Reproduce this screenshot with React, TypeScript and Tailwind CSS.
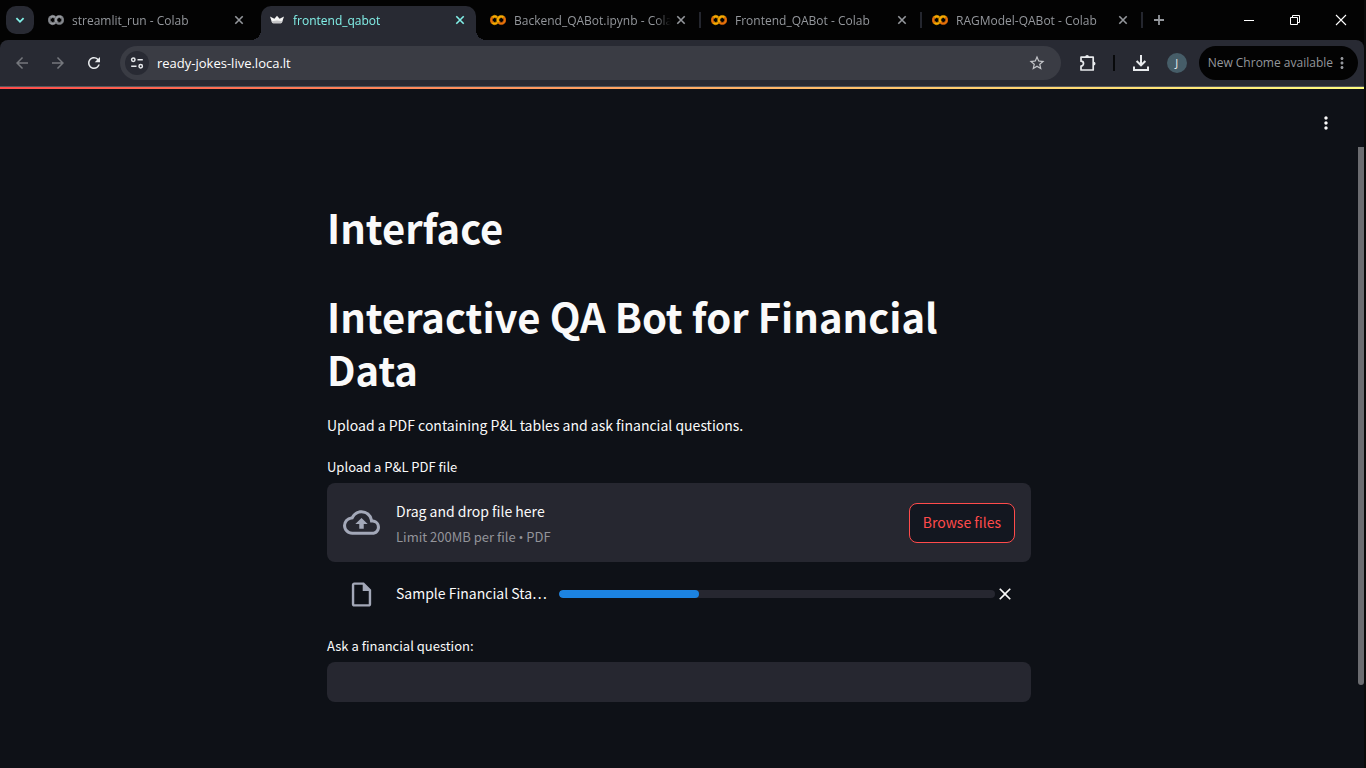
import type { ReactNode } from "react";
import {
  MdArrowBack,
  MdArrowForward,
  MdClose,
  MdMoreVert,
  MdOutlineCloudUpload,
  MdOutlineInsertDriveFile,
  MdRefresh,
  MdStarBorder,
} from "react-icons/md";

function ColabIcon({ muted = false }: { muted?: boolean }) {
  const light = muted ? "#9a9da2" : "#F9AB00";
  const dark = muted ? "#85888d" : "#E8710A";
  return (
    <svg viewBox="0 0 24 24" className="size-4 shrink-0" strokeWidth="0.8" aria-hidden="true">
      <path fill={light} stroke={light} d="M2.19 7.1 4.54 9.46a3.59 3.59 0 0 1 5.08 0l1.71-2.93-.1-.08A6.93 6.93 0 0 0 2.19 7.1Z" />
      <path fill={light} stroke={light} d="M11.34 17.46 9.62 14.54a3.59 3.59 0 0 1-5.08 0L2.19 16.9a6.93 6.93 0 0 0 9 .65l.15-.09Z" />
      <path fill={dark} stroke={dark} d="M4.54 9.46 2.19 7.1a6.93 6.93 0 0 0 0 9.79l2.36-2.36a3.59 3.59 0 0 1-.01-5.07Z" />
      <path fill={light} stroke={light} d="M12 7.1a6.93 6.93 0 0 0 0 9.79l2.36-2.36a3.59 3.59 0 1 1 5.08-5.08L21.81 7.1A6.93 6.93 0 0 0 12 7.1Z" />
      <path fill={dark} stroke={dark} d="M21.81 7.1 19.46 9.46a3.59 3.59 0 0 1-5.08 5.08L12 16.9A6.93 6.93 0 0 0 21.81 7.1Z" />
    </svg>
  );
}

function CrownIcon() {
  return (
    <svg viewBox="0 0 16 16" className="size-4 shrink-0" aria-hidden="true">
      <path fill="#f5f5f5" d="M1 4.4 5.400 6.800 8 3.800l2.600 3L15 4.400l-1.900 5.900c-.2.7-.7 1-1.400 1H4.300c-.7 0-1.200-.3-1.400-1Z" />
      <path fill="#c4c4c6" d="M2.600 9.300 8 8.500l5.400.8-.3 1c-.2.7-.7 1-1.400 1H4.300c-.7 0-1.200-.3-1.400-1Z" />
    </svg>
  );
}

type Tab = { title: string; icon: ReactNode; active?: boolean; divider?: boolean };

const tabs: Tab[] = [
  { title: "streamlit_run - Colab", icon: <ColabIcon muted /> },
  { title: "frontend_qabot", icon: <CrownIcon />, active: true },
  { title: "Backend_QABot.ipynb - Colab", icon: <ColabIcon />, divider: true },
  { title: "Frontend_QABot - Colab", icon: <ColabIcon />, divider: true },
  { title: "RAGModel-QABot - Colab", icon: <ColabIcon />, divider: true },
];

function BrowserTab({ title, icon, active, divider }: Tab) {
  return (
    <div className="relative min-w-0 max-w-[221px] flex-1 pt-[6px]">
      <div
        className={
          active
            ? "relative mr-[6px] flex h-[34px] items-center rounded-t-[10px] bg-[#282a33] pb-[6px] pl-2 text-[#82f0e8] before:absolute before:bottom-0 before:-left-[10px] before:size-[10px] before:bg-[radial-gradient(circle_at_0_0,transparent_10px,#282a33_10px)] after:absolute after:-right-[10px] after:bottom-0 after:size-[10px] after:bg-[radial-gradient(circle_at_100%_0,transparent_10px,#282a33_10px)]"
            : "mr-[6px] flex h-[34px] items-center pb-[6px] pl-2 text-[#94979c]"
        }
      >
        {icon}
        <span className="ml-2 min-w-0 flex-1 overflow-hidden mask-r-from-90% pt-[2px] text-[12px] leading-4 whitespace-nowrap">
          {title}
        </span>
        <button aria-label={`Close ${title}`} className="mr-2 ml-[2px] flex size-4 items-center justify-center">
          <svg viewBox="0 0 16 16" className="size-4" stroke="currentColor" strokeWidth="1.6" aria-hidden="true">
            <path d="m4.3 4.3 7.4 7.4m0-7.4-7.4 7.4" />
          </svg>
        </button>
      </div>
      {divider && <span className="absolute top-3 right-[2px] h-4 w-[2px] bg-[#24262e]" />}
    </div>
  );
}

function TabStrip() {
  return (
    <div className="flex h-10 bg-[#030303]">
      <button aria-label="Search tabs" className="m-[6px] flex size-7 shrink-0 items-center justify-center rounded-[10px] bg-[#282a33] text-[#82f0e8]">
        <svg viewBox="0 0 16 16" className="size-4" fill="none" stroke="currentColor" strokeWidth="1.8" aria-hidden="true">
          <path d="m4.4 6.2 3.6 3.6 3.6-3.6" />
        </svg>
      </button>
      <div className="flex min-w-0 flex-1">
        {tabs.map((tab) => (
          <BrowserTab key={tab.title} {...tab} />
        ))}
        <button aria-label="New tab" className="flex w-7 shrink-0 items-center justify-center text-[#94979c]">
          <svg viewBox="0 0 16 16" className="size-4 shrink-0" stroke="currentColor" strokeWidth="1.8" aria-hidden="true">
            <path d="M8 3v10M3 8h10" />
          </svg>
        </button>
      </div>
      <div className="flex shrink-0 text-white">
        <button aria-label="Minimize" className="flex w-[46px] items-center justify-center">
          <svg viewBox="0 0 12 12" className="size-3" stroke="currentColor" aria-hidden="true">
            <path d="M1 6.5h10" />
          </svg>
        </button>
        <button aria-label="Restore" className="flex w-[46px] items-center justify-center">
          <svg viewBox="0 0 12 12" className="size-3" fill="none" stroke="currentColor" aria-hidden="true">
            <path d="M1.5 3.5h7v7h-7zM3.5 3.5v-2h7v7h-2" />
          </svg>
        </button>
        <button aria-label="Close window" className="flex w-[46px] items-center justify-center">
          <svg viewBox="0 0 12 12" className="size-3" stroke="currentColor" strokeWidth="1.1" aria-hidden="true">
            <path d="m1 1 10 10m0-10L1 11" />
          </svg>
        </button>
      </div>
    </div>
  );
}

function Toolbar() {
  return (
    <div className="bg-[#030303]">
      <div className="flex h-[46px] items-center rounded-t-[8px] bg-[#282a33] pr-[6px] pl-1 text-[#e8eaed]">
        <button aria-label="Back" className="flex w-9 justify-center text-[#75777d]">
          <MdArrowBack size={18} />
        </button>
        <button aria-label="Forward" className="flex w-9 justify-center text-[#75777d]">
          <MdArrowForward size={18} />
        </button>
        <button aria-label="Reload" className="flex w-9 justify-center">
          <MdRefresh size={18} />
        </button>
        <div className="ml-2 flex h-[34px] min-w-0 flex-1 items-center rounded-full bg-[#3a3c44] px-[5px]">
          <button aria-label="View site information" className="flex size-6 shrink-0 items-center justify-center rounded-full bg-[#282a33]">
            <svg viewBox="0 0 16 16" className="size-4" fill="none" stroke="currentColor" strokeWidth="1.5" aria-hidden="true">
              <circle cx="4.3" cy="4.7" r="1.7" />
              <path d="M8.5 4.7h5.3M2.2 11.3h5.3" />
              <circle cx="11.7" cy="11.3" r="1.7" />
            </svg>
          </button>
          <input
            aria-label="Address"
            defaultValue="ready-jokes-live.loca.lt"
            className="ml-2 min-w-0 flex-1 bg-transparent pt-[2px] text-[13px] text-white outline-none"
          />
          <button aria-label="Bookmark this page" className="mr-[10px] text-[#c4c6ca]">
            <MdStarBorder size={18} />
          </button>
        </div>
        <button aria-label="Extensions" className="ml-[18px] flex size-[18px] items-center justify-center">
          <svg viewBox="0 0 18 18" className="size-[18px] shrink-0" fill="none" stroke="currentColor" strokeWidth="1.7" strokeLinejoin="round" aria-hidden="true">
            <path d="M2 3.2h12.2V16H2v-4c1.5 0 2.5-1 2.5-2.4S3.5 7.2 2 7.2Z" />
            <path fill="currentColor" stroke="none" d="M6.2 3a1.9 1.9 0 0 1 3.8 0ZM14.6 7.7a1.9 1.9 0 0 1 0 3.8Z" />
          </svg>
        </button>
        <span className="mx-4 h-4 w-[2px] bg-[#08090b]" />
        <button aria-label="Downloads" className="flex size-5 items-center justify-center">
          <svg viewBox="0 0 18 18" className="size-[18px] shrink-0" fill="none" stroke="currentColor" strokeWidth="2" aria-hidden="true">
            <path d="M9 1v10M4.6 7 9 11.3 13.4 7M2 12.5V16h14v-3.5" />
          </svg>
        </button>
        <button aria-label="Profile" className="mr-3 ml-4 flex size-5 items-center justify-center rounded-full bg-[#465d68] text-[11px]">
          J
        </button>
        <button className="flex h-[34px] items-center rounded-full bg-[#030303] pr-[7px] pl-[9px] text-[12px] whitespace-nowrap text-[#94979c]">
          New Chrome available
          <MdMoreVert size={18} />
        </button>
      </div>
    </div>
  );
}

function Uploader() {
  return (
    <section className="mt-[17px]">
      <label htmlFor="pdf" className="block pb-[3px] text-[13px] leading-[26px]">
        Upload a P&amp;L PDF file
      </label>
      <div className="flex items-center rounded-lg bg-[#262730] p-4">
        <MdOutlineCloudUpload size={37} className="mr-4 shrink-0 text-[#a3a8b8]" />
        <div className="min-w-0 flex-1">
          <p className="text-[14px] leading-6">Drag and drop file here</p>
          <p className="mt-1 text-[13px] leading-[19px] text-[#93949a]">
            Limit 200MB per file <span className="font-['Open_Sans',sans-serif] leading-none">•</span> PDF
          </p>
        </div>
        <input id="pdf" type="file" accept="application/pdf" className="hidden" />
        <button className="h-10 rounded-lg border border-[#ff4b4b] bg-[#131720] px-[13px] text-[14px] text-[#ff4b4b]">
          Browse files
        </button>
      </div>
      <div className="flex h-16 items-center px-4">
        <div className="mr-4 flex w-[37px] shrink-0 justify-center">
          <MdOutlineInsertDriveFile size={29} className="text-[#a3a8b8]" />
        </div>
        <p className="mr-2 w-[155px] shrink-0 pb-[2px] text-[14px] leading-6 whitespace-nowrap">Sample Financial Sta…</p>
        <div role="progressbar" aria-label="Upload progress" aria-valuenow={32} className="h-2 min-w-0 flex-1 overflow-hidden rounded-full bg-[#262730]">
          <div className="h-full w-[32%] rounded-full bg-[#1c83e1]" />
        </div>
        <button aria-label="Remove file">
          <MdClose size={20} />
        </button>
      </div>
    </section>
  );
}

function StreamlitPage() {
  return (
    <div className="flex flex-1 flex-col bg-[#0e1117] font-['Noto_Sans_CJK_SC',sans-serif] text-[#fafafa]">
      <div className="h-[3px] border-t border-[#55575c] bg-linear-to-r from-[#ff4b4b] to-[#fffd80]" />
      <header className="flex h-[58px] shrink-0 items-end justify-end pr-7 pb-[14px]">
        <button aria-label="Main menu">
          <MdMoreVert size={20} />
        </button>
      </header>
      <div className="flex flex-1">
        <main className="min-w-0 flex-1 pt-[54px] pb-16">
          <div className="mx-auto max-w-[704px]">
            <h1 className="text-[40px] leading-[53px] font-bold">Interface</h1>
            <h1 className="mt-9 text-[40px] leading-[53px] font-bold">Interactive QA Bot for Financial Data</h1>
            <p className="mt-[17px] text-[14px] leading-6">
              Upload a PDF containing P&amp;L tables and ask financial questions.
            </p>
            <Uploader />
            <label htmlFor="question" className="mt-[7px] block pb-[3px] text-[13px] leading-[26px]">
              Ask a financial question:
            </label>
            <input id="question" type="text" className="block h-10 w-full rounded-lg bg-[#262730] px-3 text-[14px] outline-none" />
          </div>
        </main>
        <div className="w-[6px] shrink-0">
          <div className="h-[538px] rounded-b-[3px] bg-[#6b6c70]" />
        </div>
      </div>
    </div>
  );
}

export default function App() {
  return (
    <div className="flex min-h-screen flex-col bg-[#0a0a0a] pr-[2px] font-['Open_Sans',sans-serif]">
      <TabStrip />
      <Toolbar />
      <StreamlitPage />
    </div>
  );
}
